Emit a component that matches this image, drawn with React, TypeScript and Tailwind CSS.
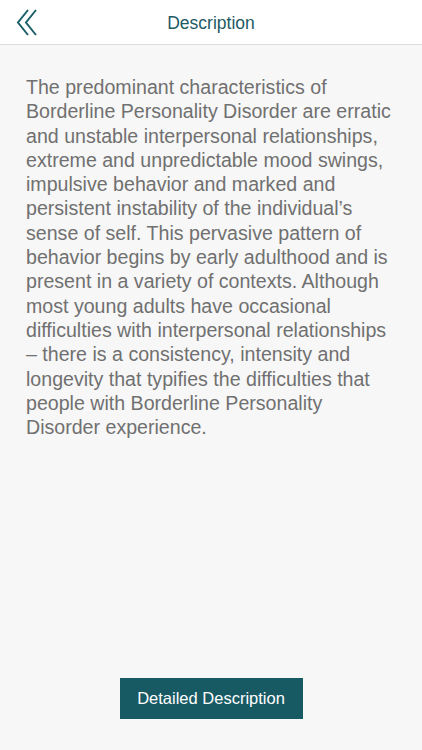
export default function App() {
  return (
    <div
      className="flex h-[750px] w-full flex-col bg-[#f7f7f7]"
      style={{ fontFamily: '"Liberation Sans", Arial, sans-serif' }}
    >
      <header className="relative flex h-[45px] shrink-0 items-center justify-center border-b border-[#dcdcdc] bg-white">
        <button type="button" className="absolute left-[16px] top-[9px] text-[#1d5f68]">
          <svg width="24" height="28" viewBox="0 0 24 28" fill="none" stroke="currentColor" strokeWidth="2">
            <path d="M12 1 L2 13.5 L12 26" />
            <path d="M20 1 L10 13.5 L20 26" />
          </svg>
        </button>
        <h1 className="pt-[2px] text-[17.5px] text-[#1d5a63]">Description</h1>
      </header>

      <main className="flex flex-1 flex-col px-[26px] pt-[30px]">
        <p className="text-[19.6px] leading-[24.3px] text-[#707070]">
          The predominant characteristics of Borderline Personality Disorder are erratic and unstable
          interpersonal relationships, extreme and unpredictable mood swings, impulsive behavior and
          marked and persistent instability of the individual’s sense of self. This pervasive pattern of
          behavior begins by early adulthood and is present in a variety of contexts. Although most young
          adults have occasional difficulties with interpersonal relationships – there is a consistency,
          intensity and longevity that typifies the difficulties that people with Borderline Personality
          Disorder experience.
        </p>

        <div className="mt-auto flex justify-center pb-[31px]">
          <button
            type="button"
            className="h-[41px] w-[183px] bg-[#185a64] text-[16.5px] text-white"
          >
            Detailed Description
          </button>
        </div>
      </main>
    </div>
  );
}
